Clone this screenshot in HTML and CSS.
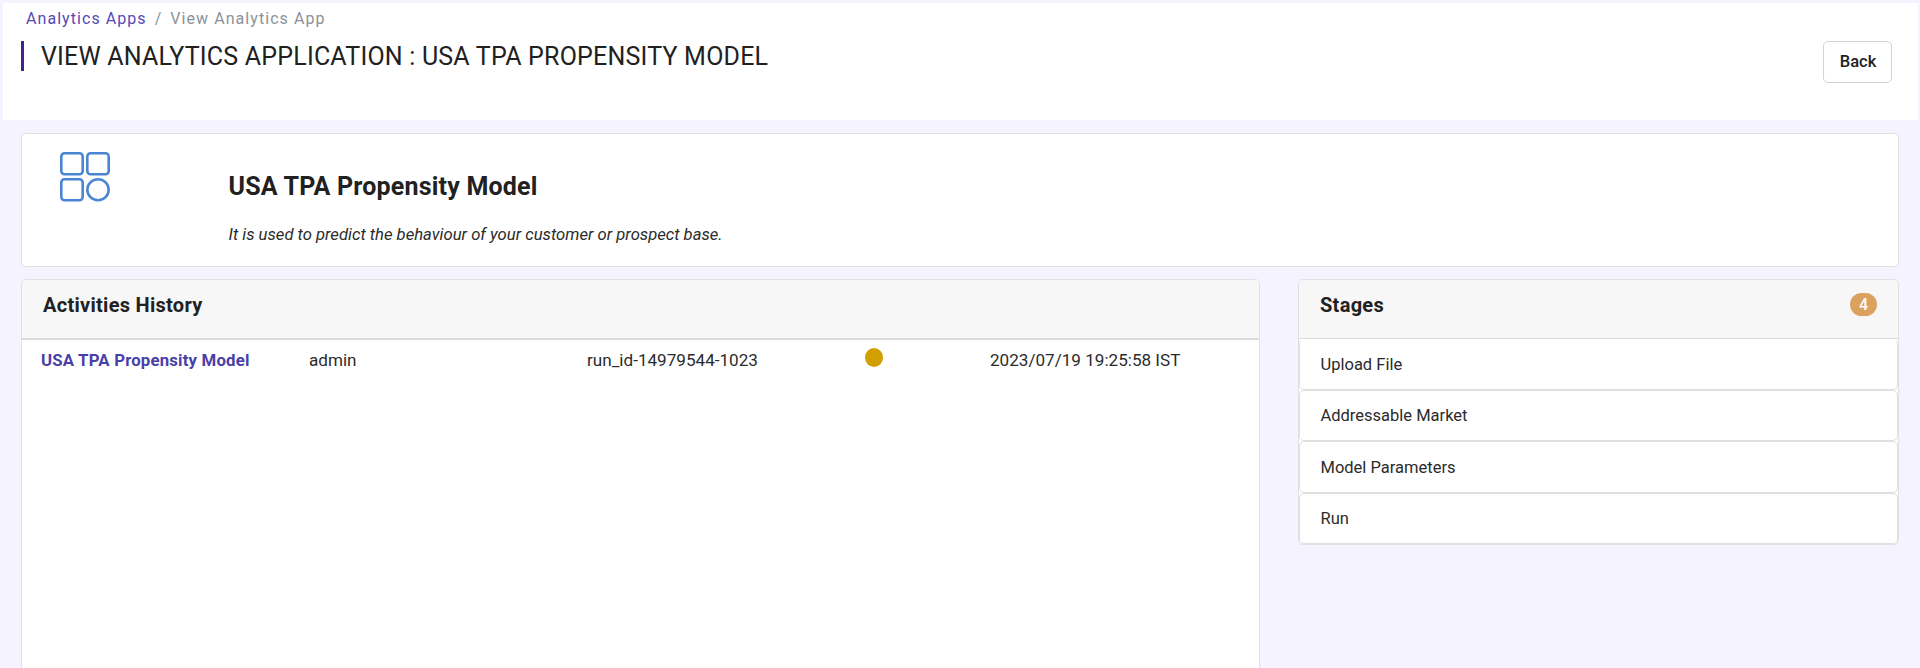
FILE: index.html
```html
<!DOCTYPE html>
<html lang="en">
<head>
<meta charset="utf-8">
<title>View Analytics App</title>
<link rel="stylesheet" href="styles.css">
</head>
<body>
<header class="page-header">
  <nav class="breadcrumb"><a class="crumb-link">Analytics Apps</a><span class="crumb-sep">/</span><span class="crumb-current">View Analytics App</span></nav>
  <div class="title-row">
    <h1 class="page-title">VIEW ANALYTICS APPLICATION : USA TPA PROPENSITY MODEL</h1>
    <button class="back-button">Back</button>
  </div>
</header>
<main class="content">
  <section class="card summary">
    <svg class="app-icon" viewBox="0 0 50 50" fill="none" stroke="#4a86d4" stroke-width="2.6">
      <rect x="1.3" y="1.3" width="21.4" height="20.9" rx="3.2"/>
      <rect x="27.3" y="1.3" width="21.4" height="20.9" rx="3.2"/>
      <rect x="1.3" y="27.3" width="21.4" height="20.9" rx="3.2"/>
      <ellipse cx="38" cy="37.75" rx="10.7" ry="10.45"/>
    </svg>
    <div class="summary-text">
      <h2 class="app-name">USA TPA Propensity Model</h2>
      <p class="app-description">It is used to predict the behaviour of your customer or prospect base.</p>
    </div>
  </section>
  <div class="columns">
    <section class="card activities">
      <div class="card-header activities-header"><h3 class="card-title">Activities History</h3></div>
      <div class="activity-row">
        <a class="activity-name">USA TPA Propensity Model</a>
        <span>admin</span>
        <span>run_id-14979544-1023</span>
        <span class="status-dot"></span>
        <span>2023/07/19 19:25:58 IST</span>
      </div>
    </section>
    <section class="card stages">
      <div class="card-header"><h3 class="card-title">Stages</h3><span class="badge">4</span></div>
      <ul class="stage-list">
        <li class="stage">Upload File</li>
        <li class="stage">Addressable Market</li>
        <li class="stage">Model Parameters</li>
        <li class="stage">Run</li>
      </ul>
    </section>
  </div>
</main>
</body>
</html>
```
FILE: styles.css
```css
* { box-sizing: border-box; }
html { height: 100%; }
body {
  margin: 0;
  height: 668px;
  overflow: hidden;
  padding: 3px 2px 0 3px;
  background: #f5f3ff;
  color: #212121;
  font: 400 16px/24px Roboto, sans-serif;
  display: flex;
  flex-direction: column;
}
h1, h2, h3, p, ul { margin: 0; padding: 0; }
.page-header {
  flex: none;
  height: 117px;
  padding: 4px 26px 0 18px;
  background: #fff;
}
.breadcrumb {
  display: flex;
  gap: 8px;
  height: 24px;
  padding-left: 5px;
  letter-spacing: 1.06px;
  color: #8b9299;
}
.crumb-link { color: #5549b5; }
.title-row {
  display: flex;
  justify-content: space-between;
  padding-top: 10px;
}
.page-title {
  height: 30px;
  padding-left: 17px;
  border-left: 3px solid #43248a;
  font-size: 25px;
  line-height: 32px;
  font-weight: 400;
  letter-spacing: 0.2px;
}
.back-button {
  width: 69px;
  height: 42px;
  padding: 0 0 1px 1px;
  border: 1px solid #ced4da;
  border-radius: 5px;
  background: #fff;
  color: #212121;
  font: 500 16.5px/24px Roboto, sans-serif;
}
.content {
  flex: 1;
  display: flex;
  flex-direction: column;
  gap: 12px;
  padding: 13px 19px 0 18px;
}
.card {
  border: 1px solid #e0e0e0;
  border-radius: 5px;
  background: #fff;
}
.summary {
  flex: none;
  display: flex;
  height: 134px;
  padding: 18px 38px 0;
}
.app-icon { flex: none; width: 50px; height: 50px; }
.summary-text { padding: 17px 0 0 118.5px; }
.app-name {
  font-size: 25px;
  line-height: 36px;
  font-weight: 700;
  letter-spacing: 0.2px;
}
.app-description {
  margin-top: 18px;
  color: #2b2b2b;
  font-size: 16.65px;
  font-style: italic;
  line-height: 24px;
}
.columns {
  flex: 1;
  display: grid;
  grid-template-columns: 1239px 601px;
  justify-content: space-between;
  align-items: start;
}
.activities {
  height: 389px;
  border-bottom: 0;
  border-bottom-left-radius: 0;
  border-bottom-right-radius: 0;
}
.card-header {
  display: flex;
  justify-content: space-between;
  align-items: flex-start;
  height: 59px;
  padding: 13px 21px 0;
  border-bottom: 1px solid #dcdcdc;
  border-radius: 4px 4px 0 0;
  background: #f7f7f7;
}
.activities-header { height: 60px; border-bottom-width: 2px; }
.card-title {
  font-size: 20px;
  line-height: 24px;
  font-weight: 700;
  letter-spacing: 0.28px;
}
.badge {
  width: 27px;
  height: 23px;
  border-radius: 12px;
  background: #dba15f;
  color: #fff;
  font-size: 16px;
  line-height: 24px;
  font-weight: 500;
  text-align: center;
}
.activity-row {
  display: grid;
  grid-template-columns: 268px 278px 278px 125px 1fr;
  padding: 8px 0 0 19px;
  color: #2b2b2b;
  font-size: 17.1px;
  line-height: 25px;
}
.activity-name {
  color: #4a3fa8;
  font-size: 16.8px;
  font-weight: 700;
  letter-spacing: 0.18px;
}
.status-dot {
  width: 18px;
  height: 19px;
  border-radius: 50%;
  background: #d19f00;
}
.stage-list { list-style: none; }
.stage {
  height: 51.2px;
  padding: 12.9px 20.5px 0;
  border: 1px solid #e0e0e0;
  border-radius: 5px;
  color: #2b2b2b;
  font-size: 16.5px;
}
.stage:first-child { border-top-color: transparent; }
.stage:nth-child(n+3) { padding-top: 13.7px; }
```
